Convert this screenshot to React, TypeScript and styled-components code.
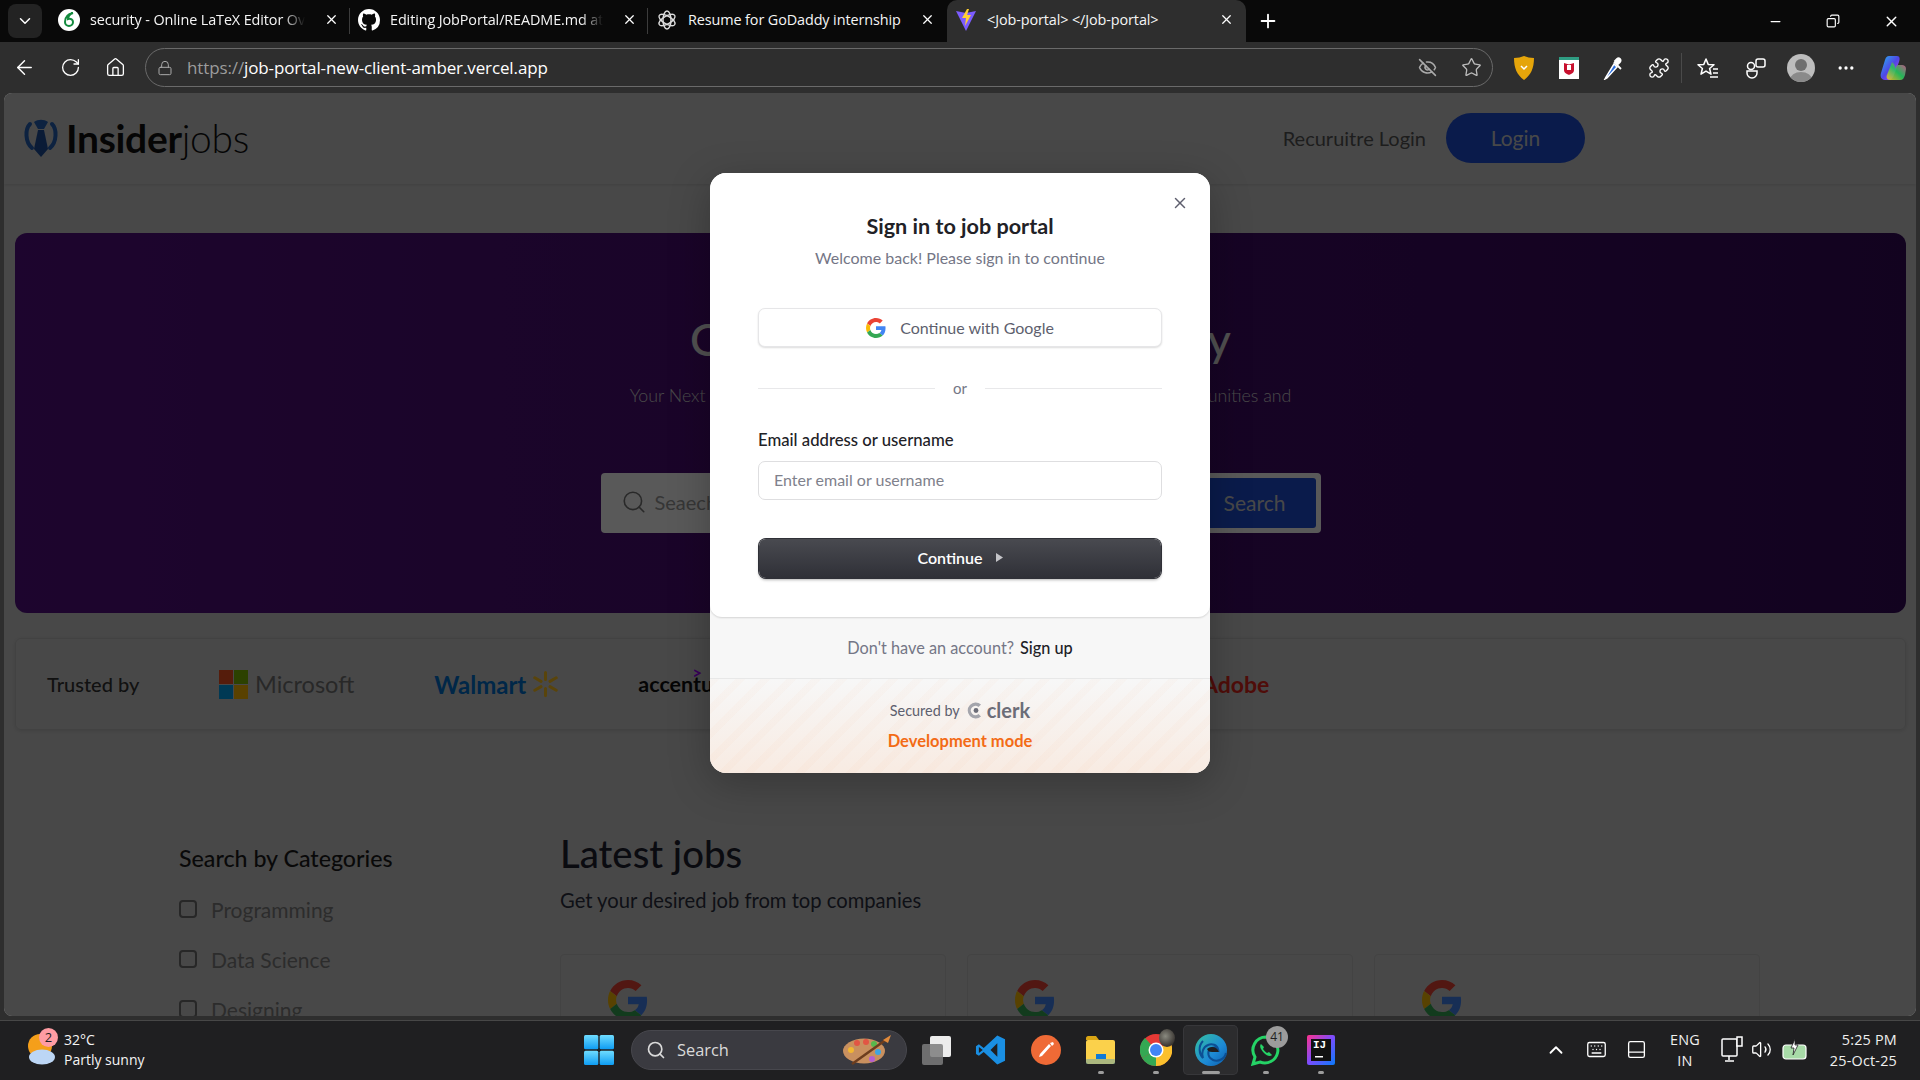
import React from 'react';
import styled, { createGlobalStyle } from 'styled-components';
import {
	ArrowLeft,
	ChevronDown,
	ChevronUp,
	Copy,
	EyeOff,
	Home,
	Keyboard,
	Lock,
	Minus,
	MoreHorizontal,
	PanelBottom,
	Plus,
	Puzzle,
	RotateCw,
	Search,
	Star,
	Volume2,
	X,
} from 'lucide-react';

const GlobalStyle = createGlobalStyle`
	html, body {
		margin: 0;
		padding: 0;
		background: #2e2e2e;
	}
	* {
		box-sizing: border-box;
	}
`;

const outfit = `Lato, 'Noto Sans', sans-serif`;
const segoe = `'Open Sans', 'Noto Sans', sans-serif`;

const Screen = styled.div`
	width: 1920px;
	height: 1080px;
	display: flex;
	flex-direction: column;
	overflow: hidden;
	background: #2e2e2e;
	font-family: ${segoe};
`;

/* browser chrome */
const TabStrip = styled.div`
	height: 42px;
	flex: none;
	display: flex;
	align-items: stretch;
	background: #090909;
	color: #fff;
`;

const TabMenu = styled.div`
	width: 34px;
	height: 34px;
	margin: 4px 8px;
	flex: none;
	border-radius: 8px;
	background: #232323;
	display: flex;
	align-items: center;
	justify-content: center;
`;

const Tab = styled.div<{ $active?: boolean; $width: number; $divider?: boolean }>`
	width: ${(p) => p.$width}px;
	flex: none;
	display: flex;
	align-items: center;
	gap: 10px;
	padding: 0 6px 3px 8px;
	border-radius: ${(p) => (p.$active ? '10px 10px 0 0' : '0')};
	background: ${(p) => (p.$active ? '#2e2e2e' : 'transparent')};
	position: relative;
	&::after {
		content: '';
		display: ${(p) => (p.$divider ? 'block' : 'none')};
		position: absolute;
		right: 0;
		top: 8px;
		height: 26px;
		width: 1px;
		background: #3c3c3c;
	}
`;

const TabTitle = styled.span<{ $fade?: boolean }>`
	flex: 1;
	min-width: 0;
	font-size: 14.4px;
	letter-spacing: -0.1px;
	white-space: nowrap;
	overflow: hidden;
	color: #f5f5f5;
	${(p) => (p.$fade ? 'mask-image: linear-gradient(90deg, #000 90%, transparent);' : '')}
`;

const TabFavicon = styled.div`
	width: 22px;
	height: 22px;
	flex: none;
	display: flex;
	align-items: center;
	justify-content: center;
`;

const NewTab = styled.div`
	width: 44px;
	display: flex;
	align-items: center;
	justify-content: center;
`;

const WindowButtons = styled.div`
	margin-left: auto;
	display: flex;
	align-items: center;
	padding-right: 0;
`;

const WindowButton = styled.div`
	width: 58px;
	display: flex;
	justify-content: center;
`;

const Toolbar = styled.div`
	height: 51px;
	flex: none;
	display: flex;
	align-items: center;
	color: #fff;
`;

const ToolButton = styled.div<{ $width?: number }>`
	width: ${(p) => p.$width ?? 45}px;
	height: 36px;
	flex: none;
	display: flex;
	align-items: center;
	justify-content: center;
`;

const AddressBar = styled.div`
	width: 1348px;
	height: 39px;
	margin: 0 8px 0 7px;
	flex: none;
	display: flex;
	align-items: center;
	border: 1px solid #6a6a6a;
	border-radius: 20px;
	padding: 0 1px 0 11px;
	gap: 14px;
`;

const Url = styled.div`
	flex: 1;
	font-size: 17px;
	color: #fff;
	letter-spacing: -0.12px;
	span {
		color: #9c9c9c;
	}
`;

const ToolSep = styled.div`
	width: 1px;
	height: 30px;
	background: #4a4a4a;
	flex: none;
`;

const Avatar = styled.div`
	width: 28px;
	height: 28px;
	border-radius: 50%;
	background: #bdbdbd;
	overflow: hidden;
`;

/* page behind the dialog */
const Page = styled.div`
	flex: 1;
	margin: 0 4px 4px;
	border-radius: 8px;
	background: #cfcfcf;
	position: relative;
	overflow: hidden;
	font-family: ${outfit};
`;

const Nav = styled.div`
	height: 91px;
	display: flex;
	align-items: center;
	padding: 0 331px 2px 20px;
	box-shadow: 0 1px 3px rgba(0, 0, 0, 0.12);
`;

const Brand = styled.div`
	display: flex;
	align-items: center;
	gap: 8px;
	font-size: 39px;
	color: #111;
	letter-spacing: -0.3px;
	b {
		font-weight: 700;
	}
	span {
		font-weight: 300;
	}
`;

const NavLinks = styled.div`
	margin-left: auto;
	display: flex;
	align-items: center;
	gap: 20px;
`;

const RecruiterLink = styled.span`
	font-size: 20px;
	color: #555;
`;

const LoginButton = styled.button`
	width: 139px;
	height: 50px;
	border: none;
	border-radius: 25px;
	background: #1d4ed8;
	color: #cfcfcf;
	font: 400 21px ${outfit};
`;

const Hero = styled.section`
	height: 380px;
	margin: 49px 10px 0 11px;
	border-radius: 12px;
	background: linear-gradient(90deg, #551183, #36095b);
	display: flex;
	flex-direction: column;
	align-items: center;
	padding-top: 78px;
	color: #e8e8e8;
`;

const HeroTitle = styled.h1`
	margin: 0;
	font-size: 45px;
	line-height: 56px;
	font-weight: 500;
`;

const HeroText = styled.p`
	margin: 14px 0 0;
	width: 680px;
	text-align: center;
	font-size: 17.8px;
	line-height: 28px;
	font-weight: 300;
	color: #d0d0d0;
`;

const SearchBox = styled.div`
	width: 720px;
	height: 60px;
	margin-top: 36px;
	padding: 5px;
	border-radius: 4px;
	background: #fff;
	display: flex;
	align-items: center;
	justify-content: space-between;
`;

const SearchHint = styled.div`
	display: flex;
	align-items: center;
	gap: 8px;
	padding: 0 0 2px 15px;
	font-size: 20px;
	color: #9a9a9a;
`;

const SearchButton = styled.button`
	width: 122px;
	height: 50px;
	border: none;
	border-radius: 3px;
	background: #1d4ed8;
	color: #cfcfcf;
	font: 400 21px ${outfit};
	padding-bottom: 3px;
`;

const TrustedCard = styled.section`
	height: 92px;
	margin: 25px 10px 0 11px;
	padding: 0 31px;
	border: 1px solid #bdbdbd;
	border-radius: 6px;
	box-shadow: 0 1px 4px rgba(0, 0, 0, 0.12);
	display: flex;
	align-items: center;
`;

const TrustedLabel = styled.span`
	width: 172px;
	font-size: 20px;
	font-weight: 500;
	color: #333;
`;

const Brands = styled.div`
	display: flex;
	align-items: center;
	gap: 80px;
`;

const BrandItem = styled.div<{ $color: string; $size: number; $weight?: number; $width?: number }>`
	display: flex;
	align-items: center;
	gap: 7px;
	${(p) => (p.$width ? `width: ${p.$width}px;` : '')}
	justify-content: flex-end;
	color: ${(p) => p.$color};
	font-size: ${(p) => p.$size}px;
	font-weight: ${(p) => p.$weight ?? 400};
	position: relative;
`;

const AccentureMark = styled.span`
	position: absolute;
	left: 54px;
	top: -9px;
	font-size: 17px;
	font-weight: 700;
	color: #a100ff;
`;

const JobsLayout = styled.section`
	display: flex;
	padding: 101px 0 0 175px;
`;

const Sidebar = styled.aside`
	width: 381px;
	flex: none;
`;

const SidebarTitle = styled.h3`
	margin: 13px 0 12px;
	font-size: 23.2px;
	line-height: 28px;
	font-weight: 500;
	color: #1c1c1c;
`;

const CategoryRow = styled.label`
	height: 50px;
	display: flex;
	align-items: center;
	gap: 14px;
	font-size: 21px;
	color: #7e7e7e;
`;

const FakeCheck = styled.span`
	width: 18px;
	height: 18px;
	border: 2px solid #6f6f6f;
	border-radius: 4px;
	flex: none;
`;

const JobsMain = styled.div`
	flex: 1;
`;

const JobsTitle = styled.h2`
	margin: 0;
	font-size: 38.3px;
	line-height: 44px;
	font-weight: 500;
	color: #1e2230;
`;

const JobsSub = styled.p`
	margin: 12px 0 0;
	font-size: 20.2px;
	line-height: 26px;
	font-weight: 400;
	color: #2b3040;
`;

const JobCards = styled.div`
	display: flex;
	gap: 21px;
	margin-top: 41px;
`;

const JobCard = styled.div`
	width: 386px;
	height: 200px;
	padding: 25px 47px;
	border: 1px solid #c0c0c0;
	border-radius: 4px;
`;

/* clerk dialog */
const Backdrop = styled.div`
	position: absolute;
	inset: 0;
	background: rgba(0, 0, 0, 0.65);
	display: flex;
	justify-content: center;
	align-items: flex-start;
	padding-top: 80px;
`;

const Modal = styled.div`
	width: 500px;
	height: 600px;
	display: flex;
	flex-direction: column;
	border-radius: 16px;
	background: #f7f7f7;
	overflow: hidden;
	font-family: ${outfit};
	box-shadow: 0 10px 40px rgba(0, 0, 0, 0.25);
`;

const ModalCard = styled.div`
	height: 444px;
	flex: none;
	position: relative;
	background: #fff;
	border-radius: 0 0 12px 12px;
	box-shadow: 0 1px 2px rgba(0, 0, 0, 0.14);
	padding: 39px 48px 0;
	display: flex;
	flex-direction: column;
`;

const CloseButton = styled.div`
	position: absolute;
	top: 21px;
	right: 21px;
	color: #5e5f6e;
	display: flex;
`;

const ModalTitle = styled.h1`
	margin: 0;
	text-align: center;
	font-size: 21.6px;
	line-height: 29px;
	font-weight: 700;
	color: #212126;
`;

const ModalSub = styled.p`
	margin: 5px 0 0;
	text-align: center;
	font-size: 16px;
	line-height: 24px;
	color: #747686;
`;

const GoogleButton = styled.button`
	height: 39px;
	margin-top: 38px;
	border: 1px solid #e6e6e8;
	border-radius: 7px;
	background: #fff;
	box-shadow: 0 1px 2px rgba(0, 0, 0, 0.14);
	display: flex;
	align-items: center;
	justify-content: center;
	gap: 14px;
	font: 400 16px ${outfit};
	color: #5e5f6e;
`;

const OrRow = styled.div`
	margin-top: 31px;
	height: 20px;
	display: flex;
	align-items: center;
	gap: 18px;
	font-size: 15px;
	color: #747686;
	&::before,
	&::after {
		content: '';
		flex: 1;
		height: 1px;
		background: #e8e8ea;
	}
`;

const FieldLabel = styled.label`
	margin-top: 31px;
	font-size: 16.7px;
	line-height: 22px;
	font-weight: 500;
	color: #212126;
`;

const TextInput = styled.input`
	width: 100%;
	height: 39px;
	margin-top: 10px;
	padding: 0 15px 2px;
	border: 1px solid #dedee0;
	border-radius: 7px;
	background: #fff;
	font: 400 16px ${outfit};
	&::placeholder {
		color: #80818c;
		opacity: 1;
	}
`;

const ContinueButton = styled.button`
	height: 39px;
	margin: 39px 1px 0;
	border: none;
	border-radius: 7px;
	background: linear-gradient(180deg, #494a50, #2f3037);
	box-shadow: 0 0 0 1px #2f3037, 0 2px 3px rgba(0, 0, 0, 0.3);
	display: flex;
	align-items: center;
	justify-content: center;
	gap: 12px;
	padding: 0 0 3px;
	font: 600 16px ${outfit};
	color: #fff;
`;

const SignUpRow = styled.div`
	height: 62px;
	flex: none;
	display: flex;
	align-items: center;
	justify-content: center;
	gap: 6px;
	font-size: 16.3px;
	color: #747686;
	border-bottom: 1px solid #e8e8e8;
	b {
		font-weight: 500;
		color: #212126;
	}
`;

const DevFooter = styled.div`
	flex: 1;
	display: flex;
	flex-direction: column;
	align-items: center;
	padding-top: 20px;
	background:
		repeating-linear-gradient(135deg, rgba(243, 107, 22, 0.025) 0 7px, transparent 7px 18px),
		linear-gradient(180deg, #f7f7f7, #f8ebe2);
`;

const SecuredBy = styled.div`
	display: flex;
	align-items: center;
	gap: 6px;
	height: 22px;
	font-size: 14.4px;
	color: #5e5f6e;
`;

const ClerkMark = styled.span`
	display: flex;
	align-items: center;
	gap: 2px;
	font-size: 20px;
	font-weight: 700;
	color: #6c6d78;
`;

const DevMode = styled.div`
	margin-top: 10px;
	font-size: 16.5px;
	font-weight: 700;
	color: #f36b16;
`;

/* windows taskbar */
const Taskbar = styled.div`
	height: 60px;
	flex: none;
	display: flex;
	align-items: center;
	padding-bottom: 2px;
	background: #1f1f21;
	border-top: 1px solid #474747;
	color: #fff;
	font-size: 14px;
	position: relative;
`;

const Weather = styled.div`
	width: 584px;
	flex: none;
	display: flex;
	align-items: center;
	gap: 8px;
	padding-left: 27px;
`;

const WeatherIcon = styled.div`
	position: relative;
	width: 29px;
	height: 38px;
	flex: none;
`;

const WeatherBadge = styled.span`
	position: absolute;
	top: -3px;
	left: 12px;
	width: 19px;
	height: 19px;
	border-radius: 50%;
	background: #ff9ca3;
	color: #1f1f21;
	font-size: 13px;
	line-height: 19px;
	text-align: center;
`;

const WeatherText = styled.div`
	font-size: 14px;
	line-height: 20px;
	color: #f4f4f4;
`;

const TaskCenter = styled.div`
	display: flex;
	align-items: center;
	height: 100%;
`;

const TaskSearch = styled.div`
	width: 276px;
	height: 40px;
	margin: 0 14px 0 17px;
	border-radius: 20px;
	background: #3a3a40;
	border: 1px solid #47474d;
	display: flex;
	align-items: center;
	gap: 11px;
	padding: 0 14px;
	font-size: 16.4px;
	color: #dadada;
	span {
		flex: 1;
	}
`;

const TaskViewButton = styled.div`
	display: flex;
	margin-right: 11px;
`;

const TaskApp = styled.div<{ $active?: boolean; $dot?: 'small' | 'wide' }>`
	width: 55px;
	height: 50px;
	flex: none;
	display: flex;
	align-items: center;
	justify-content: center;
	position: relative;
	border-radius: 5px;
	${(p) => (p.$active ? 'background: #2c2c2e; box-shadow: inset 0 0 0 1px #37373a;' : '')}
	&::after {
		content: '';
		display: ${(p) => (p.$dot ? 'block' : 'none')};
		position: absolute;
		bottom: 1px;
		left: 50%;
		transform: translateX(-50%);
		height: 3px;
		width: ${(p) => (p.$dot === 'wide' ? 18 : 6)}px;
		border-radius: 2px;
		background: #9d9d9d;
	}
`;

const AppBadge = styled.span`
	position: absolute;
	top: 1px;
	right: 5px;
	width: 22px;
	height: 22px;
	border-radius: 50%;
	background: #9c9c9c;
	color: #1f1f21;
	font-size: 12px;
	line-height: 22px;
	text-align: center;
`;

const ChromeProfile = styled.span`
	position: absolute;
	top: 4px;
	right: 8px;
	width: 16px;
	height: 18px;
	border-radius: 50%;
	background: radial-gradient(circle at 40% 40%, #8a8a80, #3a3632 70%);
`;

const Tray = styled.div`
	margin-left: auto;
	display: flex;
	align-items: center;
	padding-right: 23px;
`;

const TrayIcon = styled.div<{ $width: number }>`
	width: ${(p) => p.$width}px;
	display: flex;
	justify-content: center;
	flex: none;
`;

const TrayText = styled.div<{ $align: string; $width: number }>`
	width: ${(p) => p.$width}px;
	text-align: ${(p) => p.$align};
	font-size: 14.4px;
	letter-spacing: 0.2px;
	line-height: 21px;
	color: #f0f0f0;
	flex: none;
	white-space: nowrap;
`;

const GoogleLogo = ({ size }: { size: number }) => (
	<svg width={size} height={size} viewBox="0 0 48 48">
		<path fill="#EA4335" d="M24 9.5c3.5 0 6.7 1.2 9.2 3.6l6.9-6.9C35.9 2.4 30.5 0 24 0 14.6 0 6.5 5.4 2.6 13.2l8 6.2C12.5 13.7 17.8 9.5 24 9.5z" />
		<path fill="#4285F4" d="M46.9 24.5c0-1.6-.1-3.1-.4-4.5H24v9h12.9c-.6 3-2.2 5.5-4.7 7.2l7.7 6c4.5-4.2 7-10.3 7-17.7z" />
		<path fill="#FBBC05" d="M10.5 28.6c-.5-1.4-.8-3-.8-4.6s.3-3.2.8-4.6l-8-6.2C.9 16.5 0 20.1 0 24s.9 7.5 2.6 10.8l7.9-6.2z" />
		<path fill="#34A853" d="M24 48c6.5 0 11.9-2.1 15.9-5.8l-7.7-6c-2.2 1.5-4.9 2.3-8.2 2.3-6.2 0-11.5-4.2-13.4-9.9l-8 6.2C6.5 42.6 14.6 48 24 48z" />
	</svg>
);

const TieLogo = () => (
	<svg width="34" height="40" viewBox="0 0 34 40" fill="none">
		<path d="M8 30C1 24 1 11 6 6" stroke="#2563b8" strokeWidth="4" strokeLinecap="round" />
		<path d="M26 30c7-6 7-19 2-24" stroke="#2563b8" strokeWidth="4" strokeLinecap="round" />
		<path d="M10 4c4-3 10-3 14 0l-4 7h-6z" fill="#2563b8" />
		<path d="M14 12h6l4 19-7 8-7-8z" fill="#1d4f9c" />
	</svg>
);

const MicrosoftLogo = () => (
	<svg width="29" height="29" viewBox="0 0 29 29">
		<rect width="14" height="14" fill="#f25022" />
		<rect x="15" width="14" height="14" fill="#7fba00" />
		<rect y="15" width="14" height="14" fill="#00a4ef" />
		<rect x="15" y="15" width="14" height="14" fill="#ffb900" />
	</svg>
);

const WalmartSpark = () => (
	<svg width="25" height="30" viewBox="0 0 28 30" stroke="#ffc220" strokeWidth="3.4" strokeLinecap="round">
		<path d="M14 2v8M14 20v8M2 8l7 4M19 18l7 4M2 22l7-4M19 12l7-4" />
	</svg>
);

const ClerkLogo = () => (
	<svg width="19" height="19" viewBox="0 0 19 19">
		<path d="M15 3.5A8 8 0 1 0 15 15.5L12.5 13A4.6 4.6 0 1 1 12.5 6z" fill="#a4a5ac" />
		<circle cx="10" cy="9.5" r="2.4" fill="#6c6d78" />
	</svg>
);

const ViteIcon = () => (
	<svg width="20" height="22" viewBox="0 0 20 22">
		<path d="M0 2l10 2 10-2-10 20z" fill="#7c5cff" />
		<path d="M11 0L6 9h4l-1 8 6-11h-4l2-6z" fill="#ffcf33" />
	</svg>
);

const OverleafIcon = () => (
	<svg width="22" height="22" viewBox="0 0 22 22">
		<circle cx="11" cy="11" r="11" fill="#fff" />
		<path d="M15 4c-5 1-8 4-8 9a4 4 0 1 0 8 0c0-2-2-4-5-3 0-3 2-5 5-6z" fill="none" stroke="#138a3e" strokeWidth="2" />
	</svg>
);

const GithubIcon = () => (
	<svg width="22" height="22" viewBox="0 0 16 16" fill="#fff">
		<path d="M8 0C3.58 0 0 3.58 0 8c0 3.54 2.29 6.53 5.47 7.59.4.07.55-.17.55-.38 0-.19-.01-.82-.01-1.49-2.01.37-2.53-.49-2.69-.94-.09-.23-.48-.94-.82-1.13-.28-.15-.68-.52-.01-.53.63-.01 1.08.58 1.23.82.72 1.21 1.87.87 2.33.66.07-.52.28-.87.51-1.07-1.78-.2-3.64-.89-3.64-3.95 0-.87.31-1.59.82-2.15-.08-.2-.36-1.02.08-2.12 0 0 .67-.21 2.2.82.64-.18 1.32-.27 2-.27s1.36.09 2 .27c1.53-1.04 2.2-.82 2.2-.82.44 1.1.16 1.92.08 2.12.51.56.82 1.27.82 2.15 0 3.07-1.87 3.75-3.65 3.95.29.25.54.73.54 1.48 0 1.07-.01 1.93-.01 2.2 0 .21.15.46.55.38A8.01 8.01 0 0 0 16 8c0-4.42-3.58-8-8-8z" />
	</svg>
);

const OpenAiIcon = () => (
	<svg width="20" height="20" viewBox="0 0 20 20" fill="none" stroke="#ddd" strokeWidth="1.4">
		<ellipse cx="10" cy="10" rx="4" ry="9" />
		<ellipse cx="10" cy="10" rx="4" ry="9" transform="rotate(60 10 10)" />
		<ellipse cx="10" cy="10" rx="4" ry="9" transform="rotate(120 10 10)" />
	</svg>
);

const ShieldExt = () => (
	<svg width="20" height="24" viewBox="0 0 20 24">
		<path d="M10 0c3 1 6 2 10 2 0 10-3 17-10 22C3 19 0 12 0 2c4 0 7-1 10-2z" fill="#e5a50a" />
		<path d="M7 10l3 3 3-3" fill="none" stroke="#fff" strokeWidth="1.5" />
	</svg>
);

const McafeeExt = () => (
	<svg width="20" height="22" viewBox="0 0 20 22">
		<rect width="20" height="22" fill="#fff" />
		<rect width="20" height="3" fill="#2f9d83" />
		<path d="M5 6l5 1.5L15 6v7c0 3-3 4-5 5-2-1-5-2-5-5z" fill="#c8102e" />
		<rect x="8" y="8" width="4" height="5" fill="#fff" />
	</svg>
);

const DropperExt = () => (
	<svg width="22" height="24" viewBox="0 0 22 24" fill="none">
		<path d="M3 21l-1 2 2-1L14 11l-3-3z" fill="#2b6fe0" stroke="#fff" strokeWidth="1.5" />
		<path d="M11 6l7 7M14 3c2-2 5 1 3 3l-2 2-3-3z" fill="#fff" stroke="#fff" strokeWidth="1.8" />
	</svg>
);

const FavoritesIcon = () => (
	<svg width="24" height="24" viewBox="0 0 24 24" fill="none" stroke="#fff" strokeWidth="1.5" strokeLinejoin="round">
		<path d="M10 3l2.2 5.4 5.8.4-4.4 3.7 1.4 5.7-5-3.1-5 3.1 1.4-5.7L2 8.8l5.8-.4z" />
		<path d="M17 13h5M17 17h5M14 21h8" />
	</svg>
);

const CollectionsIcon = () => (
	<svg width="24" height="24" viewBox="0 0 24 24" fill="none" stroke="#fff" strokeWidth="1.5">
		<circle cx="7" cy="10" r="3.5" />
		<rect x="12" y="3" width="9" height="8" rx="2" />
		<path d="M3 15h10v2a5 5 0 0 1-10 0z" />
	</svg>
);

const CopilotIcon = () => (
	<svg width="26" height="26" viewBox="0 0 26 26">
		<defs>
			<linearGradient id="cpa" x1="0" y1="0" x2="1" y2="1">
				<stop offset="0" stopColor="#27b6f2" />
				<stop offset="0.5" stopColor="#4f46e5" />
				<stop offset="1" stopColor="#d946ef" />
			</linearGradient>
			<linearGradient id="cpb" x1="0" y1="1" x2="1" y2="0">
				<stop offset="0" stopColor="#fbbf24" />
				<stop offset="0.5" stopColor="#22c55e" />
				<stop offset="1" stopColor="#ec4899" />
			</linearGradient>
		</defs>
		<path d="M9 1h8c3 0 3 3 2 6l-5 13c-1 3-3 5-6 5H5c-4 0-5-4-4-7L5 5c1-3 2-4 4-4z" fill="url(#cpa)" />
		<path d="M12 7l-5 13c-1 2 0 5 3 5h10c3 0 4-2 5-5l1-6c0-3-2-4-4-4h-3c-3 0-3 2-3 4l-2-5z" fill="url(#cpb)" opacity="0.9" />
	</svg>
);

const WindowsLogo = () => (
	<svg width="30" height="30" viewBox="0 0 30 30">
		<defs>
			<linearGradient id="win" x1="0" y1="0" x2="0" y2="1">
				<stop offset="0" stopColor="#6fdcff" />
				<stop offset="1" stopColor="#0e9cf3" />
			</linearGradient>
		</defs>
		<rect width="14.3" height="14.3" rx="1.5" fill="url(#win)" />
		<rect x="15.7" width="14.3" height="14.3" rx="1.5" fill="url(#win)" />
		<rect y="15.7" width="14.3" height="14.3" rx="1.5" fill="url(#win)" />
		<rect x="15.7" y="15.7" width="14.3" height="14.3" rx="1.5" fill="url(#win)" />
	</svg>
);

const PaletteArt = () => (
	<svg width="50" height="32" viewBox="0 0 50 32">
		<ellipse cx="22" cy="17" rx="21" ry="12.5" fill="#c9905f" />
		<circle cx="9" cy="16" r="3" fill="#f2b632" />
		<circle cx="15" cy="9" r="3" fill="#e25544" />
		<circle cx="24" cy="8" r="3" fill="#e25544" />
		<circle cx="32" cy="10" r="3" fill="#58b84c" />
		<circle cx="36" cy="18" r="3" fill="#3fa4e0" />
		<circle cx="30" cy="25" r="3" fill="#b55fd0" />
		<path d="M10 30L45 5" stroke="#6d3d1e" strokeWidth="2.5" />
		<path d="M41 6l8-5-3 8z" fill="#e08a3c" />
	</svg>
);

const TaskViewIcon = () => (
	<svg width="31" height="30" viewBox="0 0 31 30">
		<rect x="9" y="1" width="21" height="21" rx="2" fill="#ececec" />
		<rect x="1" y="9" width="21" height="21" rx="2" fill="#7c7c7c" opacity="0.85" />
	</svg>
);

const VsCodeIcon = () => (
	<svg width="31" height="32" viewBox="0 0 32 32">
		<path d="M23 1l8 4v22l-8 4L9 18l-5 4-3-2v-8l3-2 5 4z" fill="#1a8fe3" />
		<path d="M23 9l-7 7 7 7z" fill="#1f1f21" />
		<path d="M4 13l4 3-4 3z" fill="#1f1f21" />
	</svg>
);

const PostmanIcon = () => (
	<svg width="30" height="30" viewBox="0 0 30 30">
		<circle cx="15" cy="15" r="15" fill="#ef6a36" />
		<path d="M8 22l3-1 9-10-2-2-9 10zM19 8l3-1 1 2-2 2z" fill="#fff" />
	</svg>
);

const FilesIcon = () => (
	<svg width="31" height="30" viewBox="0 0 31 30">
		<path d="M1 3c0-1 1-2 2-2h8l3 4H1z" fill="#d9a514" />
		<rect x="1" y="5" width="29" height="24" rx="2" fill="#fbd14b" />
		<rect x="11" y="19" width="10" height="5" fill="#0f7ad8" />
		<rect x="1" y="24" width="29" height="5" rx="1" fill="#1788e0" opacity="0.35" />
	</svg>
);

const ChromeIcon = () => (
	<svg width="32" height="32" viewBox="0 0 32 32">
		<circle cx="16" cy="16" r="16" fill="#e53935" />
		<path d="M16 16L2 24A16 16 0 0 1 5 4z" fill="#34a853" />
		<path d="M16 16L30 8a16 16 0 0 1-14 24z" fill="#fbc02d" />
		<path d="M16 16L2 24a16 16 0 0 0 14 8z" fill="#34a853" />
		<circle cx="16" cy="16" r="7.5" fill="#fff" />
		<circle cx="16" cy="16" r="6" fill="#4285f4" />
	</svg>
);

const EdgeIcon = () => (
	<svg width="32" height="32" viewBox="0 0 32 32">
		<defs>
			<linearGradient id="edge" x1="0" y1="0" x2="1" y2="1">
				<stop offset="0" stopColor="#35c1a0" />
				<stop offset="0.6" stopColor="#1d8ad6" />
				<stop offset="1" stopColor="#0b5cab" />
			</linearGradient>
		</defs>
		<circle cx="16" cy="16" r="16" fill="url(#edge)" />
		<path d="M31 19c-1 6-8 9-13 7-5-2-6-8-3-11 2-2 6-2 8 0-1-4-6-6-10-4-5 2-7 8-5 13C4 20 3 12 8 7" fill="none" stroke="#0c4f94" strokeWidth="2" />
		<path d="M12 15c3-3 10-3 12 3h-7c-3 0-4-1-5-3z" fill="#1f1f21" />
	</svg>
);

const WhatsAppIcon = () => (
	<svg width="32" height="32" viewBox="0 0 32 32" fill="none">
		<path d="M16 3a13 13 0 0 0-11 20l-2 7 7-2A13 13 0 1 0 16 3z" stroke="#25d366" strokeWidth="3" />
		<path d="M11 10c-2 2 0 6 3 9s6 4 8 2l-3-3-2 1c-2-1-3-3-4-4l1-2z" fill="#25d366" />
	</svg>
);

const IntellijIcon = () => (
	<svg width="28" height="30" viewBox="0 0 28 30">
		<defs>
			<linearGradient id="ij" x1="0" y1="0" x2="1" y2="1">
				<stop offset="0" stopColor="#ff318c" />
				<stop offset="0.5" stopColor="#7a4dff" />
				<stop offset="1" stopColor="#087cfa" />
			</linearGradient>
		</defs>
		<rect width="28" height="30" rx="2" fill="url(#ij)" />
		<rect x="4" y="4" width="20" height="22" fill="#111" />
		<rect x="8" y="21" width="8" height="1.5" fill="#fff" />
	</svg>
);

const IjLetters = styled.span`
	position: absolute;
	left: 20px;
	top: 14px;
	font: 700 11px 'Liberation Mono', monospace;
	color: #fff;
`;

const WeatherArt = () => (
	<svg width="29" height="34" viewBox="0 0 29 34">
		<circle cx="13" cy="15" r="12" fill="#f59f1a" />
		<ellipse cx="15" cy="26" rx="13" ry="7.5" fill="#bcd6f5" />
	</svg>
);

const NetworkIcon = () => (
	<svg width="22" height="28" viewBox="0 0 22 28" fill="none" stroke="#fff" strokeWidth="1.5">
		<rect x="1" y="3" width="15" height="17" rx="1" />
		<path d="M8 20v4M4 25h9" />
		<rect x="16" y="1" width="5" height="9" fill="#1f1f21" />
	</svg>
);

const BatteryIcon = () => (
	<svg width="26" height="22" viewBox="0 0 26 22" fill="none">
		<rect x="1" y="6" width="23" height="14" rx="3" fill="#a8dba8" stroke="#fff" strokeWidth="1.2" />
		<path d="M13 0l-4 9h3l-1 7 5-10h-3z" fill="#fff" stroke="#1f1f21" strokeWidth="0.8" />
	</svg>
);

const categories = ['Programming', 'Data Science', 'Designing', 'Networking'];

const App = () => (
	<Screen>
		<GlobalStyle />
		<TabStrip>
			<TabMenu>
				<ChevronDown size={18} />
			</TabMenu>
			<Tab $width={300} $divider>
				<TabFavicon>
					<OverleafIcon />
				</TabFavicon>
				<TabTitle $fade>security - Online LaTeX Editor Overleaf</TabTitle>
				<X size={15} style={{ margin: '0 5px 0 9px' }} />
			</Tab>
			<Tab $width={298} $divider>
				<TabFavicon>
					<GithubIcon />
				</TabFavicon>
				<TabTitle $fade>Editing JobPortal/README.md at main</TabTitle>
				<X size={15} style={{ margin: '0 5px 0 9px' }} />
			</Tab>
			<Tab $width={299}>
				<TabFavicon>
					<OpenAiIcon />
				</TabFavicon>
				<TabTitle>Resume for GoDaddy internship</TabTitle>
				<X size={15} style={{ margin: '0 6px' }} />
			</Tab>
			<Tab $width={299} $active>
				<TabFavicon>
					<ViteIcon />
				</TabFavicon>
				<TabTitle>&lt;Job-portal&gt; &lt;/Job-portal&gt;</TabTitle>
				<X size={15} style={{ margin: '0 6px' }} />
			</Tab>
			<NewTab>
				<Plus size={22} />
			</NewTab>
			<WindowButtons>
				<WindowButton>
					<Minus size={15} />
				</WindowButton>
				<WindowButton>
					<Copy size={14} style={{ transform: 'scaleX(-1)' }} />
				</WindowButton>
				<WindowButton>
					<X size={17} />
				</WindowButton>
			</WindowButtons>
		</TabStrip>

		<Toolbar>
			<ToolButton $width={48}>
				<ArrowLeft size={23} strokeWidth={1.5} />
			</ToolButton>
			<ToolButton>
				<RotateCw size={21} strokeWidth={1.5} />
			</ToolButton>
			<ToolButton>
				<Home size={21} strokeWidth={1.5} />
			</ToolButton>
			<AddressBar>
				<Lock size={16} color="#aaa" strokeWidth={1.5} />
				<Url>
					<span>https://</span>job-portal-new-client-amber.vercel.app
				</Url>
				<EyeOff size={19} color="#aaa" />
				<ToolButton $width={40}>
					<Star size={21} color="#bbb" strokeWidth={1.5} />
				</ToolButton>
			</AddressBar>
			<ToolButton>
				<ShieldExt />
			</ToolButton>
			<ToolButton>
				<McafeeExt />
			</ToolButton>
			<ToolButton>
				<DropperExt />
			</ToolButton>
			<ToolButton>
				<Puzzle size={22} strokeWidth={1.5} />
			</ToolButton>
			<ToolSep />
			<ToolButton $width={51}>
				<FavoritesIcon />
			</ToolButton>
			<ToolButton>
				<CollectionsIcon />
			</ToolButton>
			<ToolButton>
				<Avatar>
					<svg width="28" height="28" viewBox="0 0 28 28">
						<circle cx="14" cy="11" r="6" fill="#6f6f6f" />
						<ellipse cx="14" cy="26" rx="11" ry="8" fill="#8a8a8a" />
					</svg>
				</Avatar>
			</ToolButton>
			<ToolButton>
				<MoreHorizontal size={20} />
			</ToolButton>
			<ToolButton $width={50}>
				<CopilotIcon />
			</ToolButton>
		</Toolbar>

		<Page>
			<Nav>
				<Brand>
					<TieLogo />
					<div>
						<b>Insider</b>
						<span>jobs</span>
					</div>
				</Brand>
				<NavLinks>
					<RecruiterLink>Recuruitre Login</RecruiterLink>
					<LoginButton>Login</LoginButton>
				</NavLinks>
			</Nav>

			<Hero>
				<HeroTitle>Over 10,000+ jobs to apply</HeroTitle>
				<HeroText>
					Your Next Big Career Move Starts Right Here - Explore the Best Job Opportunities and Take the First Step Toward Your Future!
				</HeroText>
				<SearchBox>
					<SearchHint>
						<Search size={26} strokeWidth={1.5} color="#777" />
						Seaech for jobs
					</SearchHint>
					<SearchButton>Search</SearchButton>
				</SearchBox>
			</Hero>

			<TrustedCard>
				<TrustedLabel>Trusted by</TrustedLabel>
				<Brands>
					<BrandItem $color="#737373" $size={23.5}>
						<MicrosoftLogo />
						Microsoft
					</BrandItem>
					<BrandItem $color="#0071ce" $size={24} $weight={700}>
						Walmart
						<WalmartSpark />
					</BrandItem>
					<BrandItem $color="#111" $size={21.5} $weight={700}>
						<AccentureMark>&gt;</AccentureMark>
						accenture
					</BrandItem>
					<BrandItem $color="#1428a0" $size={24} $weight={700} $width={140}>
						Samsung
					</BrandItem>
					<BrandItem $color="#111" $size={24} $weight={700} $width={85}>
						amazon
					</BrandItem>
					<BrandItem $color="#e1251b" $size={23} $weight={700} $width={72}>
						Adobe
					</BrandItem>
				</Brands>
			</TrustedCard>

			<JobsLayout>
				<Sidebar>
					<SidebarTitle>Search by Categories</SidebarTitle>
					{categories.map((name) => (
						<CategoryRow key={name}>
							<FakeCheck />
							{name}
						</CategoryRow>
					))}
				</Sidebar>
				<JobsMain>
					<JobsTitle>Latest jobs</JobsTitle>
					<JobsSub>Get your desired job from top companies</JobsSub>
					<JobCards>
						{[0, 1, 2].map((n) => (
							<JobCard key={n}>
								<GoogleLogo size={40} />
							</JobCard>
						))}
					</JobCards>
				</JobsMain>
			</JobsLayout>

			<Backdrop>
				<Modal>
					<ModalCard>
						<CloseButton>
							<X size={18} />
						</CloseButton>
						<ModalTitle>Sign in to job portal</ModalTitle>
						<ModalSub>Welcome back! Please sign in to continue</ModalSub>
						<GoogleButton>
							<GoogleLogo size={20} />
							Continue with Google
						</GoogleButton>
						<OrRow>or</OrRow>
						<FieldLabel>Email address or username</FieldLabel>
						<TextInput placeholder="Enter email or username" />
						<ContinueButton>
							Continue
							<svg width="8" height="9" viewBox="0 0 8 9">
								<path d="M1 0l7 4.5L1 9z" fill="#c4c4c8" />
							</svg>
						</ContinueButton>
					</ModalCard>
					<SignUpRow>
						Don't have an account? <b>Sign up</b>
					</SignUpRow>
					<DevFooter>
						<SecuredBy>
							Secured by
							<ClerkMark>
								<ClerkLogo />
								clerk
							</ClerkMark>
						</SecuredBy>
						<DevMode>Development mode</DevMode>
					</DevFooter>
				</Modal>
			</Backdrop>
		</Page>

		<Taskbar>
			<Weather>
				<WeatherIcon>
					<WeatherArt />
					<WeatherBadge>2</WeatherBadge>
				</WeatherIcon>
				<WeatherText>
					32°C
					<br />
					Partly sunny
				</WeatherText>
			</Weather>
			<TaskCenter>
				<WindowsLogo />
				<TaskSearch>
					<Search size={20} />
					<span>Search</span>
					<PaletteArt />
				</TaskSearch>
				<TaskViewButton>
					<TaskViewIcon />
				</TaskViewButton>
				<TaskApp>
					<VsCodeIcon />
				</TaskApp>
				<TaskApp>
					<PostmanIcon />
				</TaskApp>
				<TaskApp $dot="small">
					<FilesIcon />
				</TaskApp>
				<TaskApp $dot="small">
					<ChromeIcon />
					<ChromeProfile />
				</TaskApp>
				<TaskApp $active $dot="wide">
					<EdgeIcon />
				</TaskApp>
				<TaskApp $dot="small">
					<WhatsAppIcon />
					<AppBadge>41</AppBadge>
				</TaskApp>
				<TaskApp $dot="small">
					<IntellijIcon />
					<IjLetters>IJ</IjLetters>
				</TaskApp>
			</TaskCenter>
			<Tray>
				<TrayIcon $width={40}>
					<ChevronUp size={22} />
				</TrayIcon>
				<TrayIcon $width={40}>
					<Keyboard size={21} strokeWidth={1.5} />
				</TrayIcon>
				<TrayIcon $width={40}>
					<PanelBottom size={21} strokeWidth={1.5} />
				</TrayIcon>
				<TrayText $align="center" $width={58}>
					ENG
					<br />
					IN
				</TrayText>
				<TrayIcon $width={36}>
					<NetworkIcon />
				</TrayIcon>
				<TrayIcon $width={22}>
					<Volume2 size={21} strokeWidth={1.5} />
				</TrayIcon>
				<TrayIcon $width={46}>
					<BatteryIcon />
				</TrayIcon>
				<TrayText $align="right" $width={79}>
					5:25 PM
					<br />
					25-Oct-25
				</TrayText>
			</Tray>
		</Taskbar>
	</Screen>
);

export default App;
